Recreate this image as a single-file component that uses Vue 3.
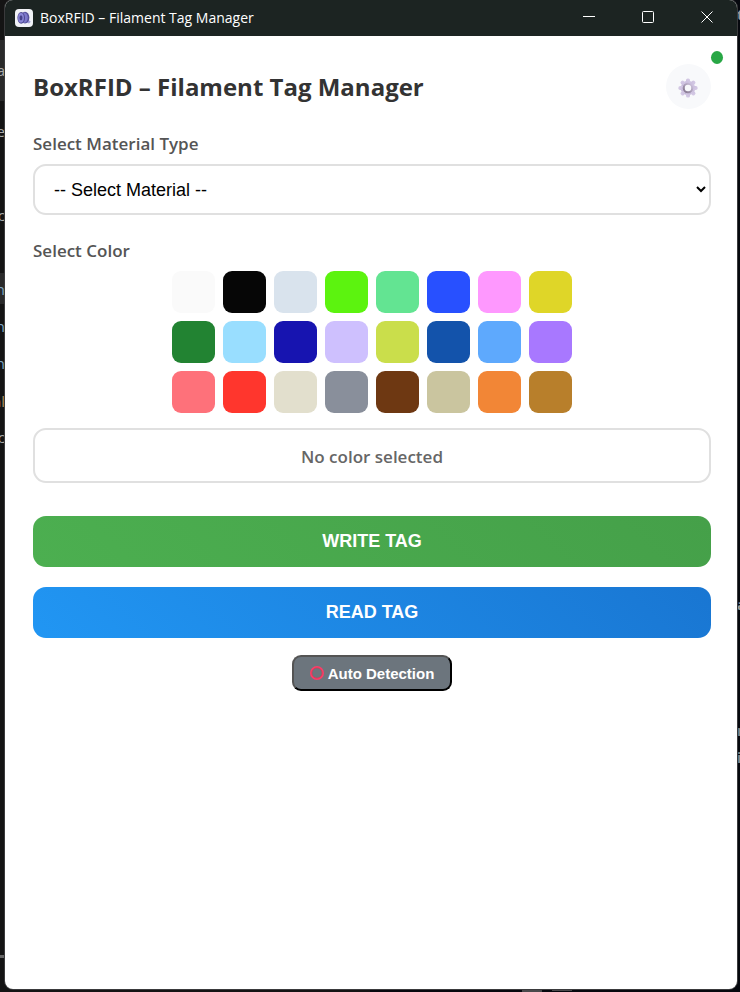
<script setup>
import { ref, computed } from 'vue'

const title = 'BoxRFID – Filament Tag Manager'
const material = ref('')
const selected = ref(null)
const auto = ref(false)

const colors = [
  '#fafafa', '#060606', '#d9e3ed', '#5cf30f', '#63e492', '#2850ff', '#fe98fe', '#dfd628',
  '#228332', '#99deff', '#1714b0', '#cec0fe', '#cade4b', '#1353ab', '#5ea9fd', '#a878ff',
  '#fe717a', '#ff362d', '#e2dfcd', '#898f9b', '#6e3812', '#cac59f', '#f28636', '#b87f2b'
]

const colorText = computed(() => (selected.value === null ? 'No color selected' : colors[selected.value]))

const leftBits = [
  { t: 'a', y: 60, c: '#aaaaaa' },
  { t: 'e', y: 121, c: '#aaaaaa' },
  { t: 'c', y: 205, c: '#aaaaaa' },
  { t: 'n', y: 279, c: '#7fa8c4' },
  { t: 'n', y: 316, c: '#7fa8c4' },
  { t: 'n', y: 353, c: '#7fa8c4' },
  { t: 'al', y: 391, c: '#b09060' },
  { t: 'c', y: 427, c: '#aaaaaa' }
]
const rightBits = [
  { t: 't', y: 4, c: '#999999' },
  { t: 'a', y: 594, c: '#999999' },
  { t: 'r', y: 720, c: '#888888' },
  { t: 'i', y: 747, c: '#888888' }
]
</script>

<template>
  <div class="desktop">
    <div class="behind" aria-hidden="true">
      <div class="panel panel-top"></div>
      <div class="panel panel-mid"></div>
      <span v-for="(b, i) in leftBits" :key="'l' + i" class="bit left" :style="{ top: b.y + 'px', color: b.c }">{{ b.t }}</span>
      <span v-for="(b, i) in rightBits" :key="'r' + i" class="bit right" :style="{ top: b.y + 'px', color: b.c }">{{ b.t }}</span>
      <div class="line"></div>
      <div class="chip chip-a"></div>
      <div class="chip chip-b"></div>
    </div>

    <div class="window">
      <header class="titlebar">
        <svg class="app-icon" viewBox="0 0 18 18" aria-hidden="true">
          <rect width="18" height="18" rx="4" fill="#f1f2f7" />
          <path d="M11 10.500c2 0 3.200.5 4.800 2.300l-1.800 1.600c-1.200-.6-2.200-.8-3.600-.4z" fill="#a3a0dc" />
          <ellipse cx="10" cy="8.600" rx="4.400" ry="5.800" fill="#55509a" />
          <ellipse cx="9" cy="8.600" rx="3.800" ry="5.200" fill="#7d78cc" />
          <ellipse cx="6.200" cy="8.800" rx="3.800" ry="5.900" fill="#4c4890" />
          <ellipse cx="6" cy="8.800" rx="2.900" ry="4.900" fill="#8a86d8" />
          <ellipse cx="6" cy="8.800" rx="1.500" ry="2.600" fill="#45418a" />
        </svg>
        <span class="app-name">{{ title }}</span>
        <div class="controls">
          <button type="button" aria-label="Minimize">
            <svg viewBox="0 0 12 12"><path d="M0 5.500h12" /></svg>
          </button>
          <button type="button" aria-label="Maximize">
            <svg viewBox="0 0 12 12"><rect x=".5" y=".5" width="11" height="11" rx="1" /></svg>
          </button>
          <button type="button" aria-label="Close">
            <svg viewBox="0 0 12 12"><path d="M.5.5l11 11M11.500.5l-11 11" /></svg>
          </button>
        </div>
      </header>

      <main class="content">
        <span class="status" role="status" aria-label="Connected"></span>
        <div class="heading">
          <h1>{{ title }}</h1>
          <button type="button" class="settings" aria-label="Settings">
            <svg viewBox="0 0 20 20">
              <defs>
                <linearGradient id="gear" gradientUnits="userSpaceOnUse" x1="3" y1="17" x2="17" y2="3">
                  <stop offset="0" stop-color="#b5a5cb" />
                  <stop offset="1" stop-color="#d9cfe9" />
                </linearGradient>
                <linearGradient id="hub" gradientUnits="userSpaceOnUse" x1="6" y1="14" x2="14" y2="6">
                  <stop offset="0" stop-color="#85788f" />
                  <stop offset="1" stop-color="#cfc4de" />
                </linearGradient>
              </defs>
              <g fill="url(#gear)">
                <circle cx="10" cy="10" r="7.200" />
                <g v-for="n in 8" :key="n" :transform="`rotate(${n * 45} 10 10)`">
                  <rect x="8" y=".4" width="4" height="6" rx="1.700" />
                </g>
              </g>
              <circle cx="10" cy="10" r="4.200" fill="none" stroke="url(#hub)" stroke-width="2.200" />
              <circle cx="10" cy="10" r="3.200" fill="#f8f9fb" />
            </svg>
          </button>
        </div>

        <label class="label" for="material">Select Material Type</label>
        <select id="material" v-model="material">
          <option value="">-- Select Material --</option>
          <option value="pla">PLA</option>
          <option value="petg">PETG</option>
          <option value="abs">ABS</option>
        </select>

        <h2 class="label">Select Color</h2>
        <div class="swatches">
          <button
            v-for="(c, i) in colors"
            :key="c"
            type="button"
            class="swatch"
            :aria-label="c"
            :aria-pressed="selected === i"
            :style="{ backgroundColor: c }"
            @click="selected = i"
          ></button>
        </div>
        <div class="chosen">{{ colorText }}</div>

        <button type="button" class="action write">WRITE TAG</button>
        <button type="button" class="action read">READ TAG</button>
        <button type="button" class="auto" :aria-pressed="auto" @click="auto = !auto">
          <svg viewBox="0 0 16 16" aria-hidden="true">
            <circle cx="8" cy="8" r="6" fill="none" stroke="#f8406a" stroke-width="2" />
            <circle cx="8" cy="8" r="5.200" fill="none" stroke="#d9304c" stroke-width=".6" />
          </svg>
          <span>Auto Detection</span>
        </button>
      </main>
    </div>
  </div>
</template>

<style>
body {
  margin: 0;
  background: #0c0c0e;
}
</style>

<style scoped>
* {
  box-sizing: border-box;
}
.desktop {
  position: relative;
  display: flex;
  min-height: 100vh;
  padding: 0 3px 3px 5px;
  overflow: hidden;
  background: linear-gradient(90deg, #141414 0 50%, #06080e 50%);
  font-family: "Segoe UI", "Open Sans", "Noto Sans", sans-serif;
}
.behind {
  position: absolute;
  inset: 0;
}
.bit {
  position: absolute;
  font-size: 15px;
  line-height: 20px;
}
.left {
  right: calc(100% - 5px);
}
.right {
  left: calc(100% - 3px);
  font-weight: 700;
}
.panel {
  position: absolute;
  left: 0;
  width: 5px;
  background: #2a2a2a;
}
.panel-top {
  top: 40px;
  height: 61px;
}
.panel-mid {
  top: 273px;
  height: 31px;
}
.line {
  position: absolute;
  top: 955px;
  left: 0;
  width: 5px;
  height: 3px;
  background: #666666;
}
.chip {
  position: absolute;
  bottom: 0;
  width: 20px;
  height: 3px;
  background: #4a4a4c;
}
.chip-a {
  left: 522px;
}
.chip-b {
  left: 552px;
  bottom: 1px;
}
.window {
  position: relative;
  display: flex;
  flex: 1;
  flex-direction: column;
  min-width: 0;
  overflow: hidden;
  background: #ffffff;
  border-radius: 8px;
  box-shadow: 0 0 0 1px #3a3a3c;
}
.titlebar {
  display: flex;
  align-items: center;
  height: 36px;
  padding: 0 1px 0 10px;
  background: #1c2422;
  color: #ffffff;
}
.app-icon {
  width: 18px;
  height: 18px;
  margin-right: 7px;
}
.app-name {
  font-size: 14px;
  line-height: 20px;
}
.controls {
  display: flex;
  align-self: stretch;
  margin-left: auto;
}
.controls button {
  display: flex;
  align-items: center;
  justify-content: center;
  width: 59px;
  padding: 0 0 2px;
  border: 0;
  background: none;
}
.controls svg {
  width: 12px;
  height: 12px;
  fill: none;
  stroke: #ffffff;
  stroke-width: 1;
}
.content {
  position: relative;
  display: flex;
  flex-direction: column;
  padding: 28px 26px 28px 28px;
}
.status {
  position: absolute;
  top: 15px;
  right: 14px;
  width: 12px;
  height: 13px;
  border-radius: 50%;
  background: #28a745;
}
.heading {
  display: flex;
  align-items: center;
  justify-content: space-between;
  margin-bottom: 22px;
}
h1 {
  margin: 0;
  color: #333333;
  font-size: 24px;
  font-weight: 700;
  line-height: 34px;
}
.settings {
  display: flex;
  align-items: center;
  justify-content: center;
  width: 45px;
  height: 45px;
  padding: 2px 2px 0 0;
  border: 0;
  border-radius: 50%;
  background: #f8f9fb;
}
.settings svg {
  width: 20px;
  height: 20px;
}
.label {
  margin: 0 0 8px;
  color: #555555;
  font-size: 17px;
  font-weight: 600;
  line-height: 25px;
}
select {
  width: 100%;
  height: 51px;
  margin-bottom: 23px;
  padding: 0 15px;
  border: 2px solid #e0e0e0;
  border-radius: 13px;
  background-color: #ffffff;
  color: #000000;
  font-family: "Liberation Sans", Arial, sans-serif;
  font-size: 18px;
}
.swatches {
  display: grid;
  grid-template-columns: repeat(8, 1fr);
  gap: 8px;
  width: 100%;
  max-width: 400px;
  margin: 0 auto 15px;
}
.swatch {
  height: 42px;
  padding: 0;
  border: 0;
  border-radius: 9px;
}
.chosen {
  margin-bottom: 33px;
  padding: 14px 13px 12px;
  border: 2px solid #e0e0e0;
  border-radius: 13px;
  color: #666666;
  font-size: 17px;
  font-weight: 600;
  line-height: 25px;
  text-align: center;
}
.action {
  height: 51px;
  border: 0;
  border-radius: 13px;
  color: #ffffff;
  font-family: "Liberation Sans", Arial, sans-serif;
  font-size: 18px;
  font-weight: 700;
}
.write {
  margin-bottom: 20px;
  background: linear-gradient(45deg, #4caf50, #45a049);
}
.read {
  margin-bottom: 17px;
  background: linear-gradient(45deg, #2196f3, #1976d2);
}
.auto {
  display: flex;
  align-items: center;
  align-self: center;
  gap: 3px;
  height: 36px;
  padding: 0 16px 0 15px;
  border: 2px outset #000000;
  border-radius: 9px;
  background: #6c757d;
  color: #ffffff;
  font-family: "Liberation Sans", Arial, sans-serif;
  font-size: 15px;
  font-weight: 700;
}
.auto svg {
  width: 16px;
  height: 16px;
}
</style>
